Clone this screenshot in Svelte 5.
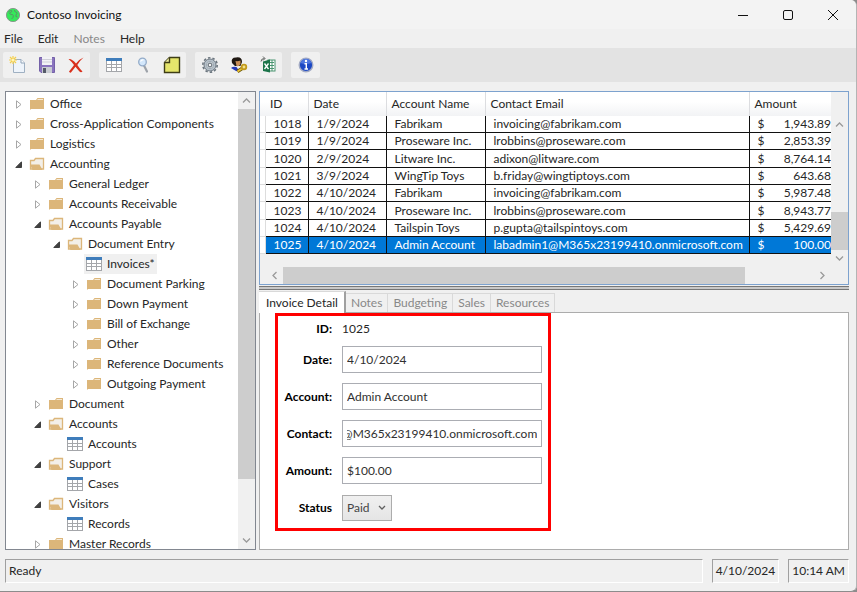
<script>
    const tree = [
        { label: "Office", depth: 0, kind: "folder" },
        { label: "Cross-Application Components", depth: 0, kind: "folder" },
        { label: "Logistics", depth: 0, kind: "folder" },
        { label: "Accounting", depth: 0, kind: "open" },
        { label: "General Ledger", depth: 1, kind: "folder" },
        { label: "Accounts Receivable", depth: 1, kind: "folder" },
        { label: "Accounts Payable", depth: 1, kind: "open" },
        { label: "Document Entry", depth: 2, kind: "open" },
        { label: "Invoices*", depth: 3, kind: "table" },
        { label: "Document Parking", depth: 3, kind: "folder" },
        { label: "Down Payment", depth: 3, kind: "folder" },
        { label: "Bill of Exchange", depth: 3, kind: "folder" },
        { label: "Other", depth: 3, kind: "folder" },
        { label: "Reference Documents", depth: 3, kind: "folder" },
        { label: "Outgoing Payment", depth: 3, kind: "folder" },
        { label: "Document", depth: 1, kind: "folder" },
        { label: "Accounts", depth: 1, kind: "open" },
        { label: "Accounts", depth: 2, kind: "table" },
        { label: "Support", depth: 1, kind: "open" },
        { label: "Cases", depth: 2, kind: "table" },
        { label: "Visitors", depth: 1, kind: "open" },
        { label: "Records", depth: 2, kind: "table" },
        { label: "Master Records", depth: 1, kind: "folder" },
    ];

    const invoices = [
        ["1018", "1/9/2024", "Fabrikam", "invoicing@fabrikam.com", "1,943.89"],
        ["1019", "1/9/2024", "Proseware Inc.", "lrobbins@proseware.com", "2,853.39"],
        ["1020", "2/9/2024", "Litware Inc.", "adixon@litware.com", "8,764.14"],
        ["1021", "3/9/2024", "WingTip Toys", "b.friday@wingtiptoys.com", "643.68"],
        ["1022", "4/10/2024", "Fabrikam", "invoicing@fabrikam.com", "5,987.48"],
        ["1023", "4/10/2024", "Proseware Inc.", "lrobbins@proseware.com", "8,943.77"],
        ["1024", "4/10/2024", "Tailspin Toys", "p.gupta@tailspintoys.com", "5,429.69"],
        ["1025", "4/10/2024", "Admin Account", "labadmin1@M365x23199410.onmicrosoft.com", "100.00"],
    ];

    const tabs = ["Invoice Detail", "Notes", "Budgeting", "Sales", "Resources"];

    let selectedNode = $state(8);
    let selectedId = $state("1025");
    let activeTab = $state("Invoice Detail");

    let date = $state("4/10/2024");
    let account = $state("Admin Account");
    let contact = $state("labadmin1@M365x23199410.onmicrosoft.com");
    let amount = $state("$100.00");
    let status = $state("Paid");

    // keep the end of a long address in view
    function scrollToEnd(node) {
        node.scrollLeft = node.scrollWidth;
    }
</script>

{#snippet tableIcon()}
    <svg width="16" height="16" viewBox="0 0 16 16" shape-rendering="crispEdges">
        <rect x="0" y="1" width="16" height="14" fill="#fff" />
        <path d="M0.500 4 V15 M5.500 4 V15 M10.500 4 V15 M15.500 4 V15 M0 7.500 H16 M0 10.500 H16 M0 14.500 H16" stroke="#a4a6aa" />
        <rect x="0" y="1" width="16" height="3" fill="#3f7dbb" />
    </svg>
{/snippet}

{#snippet arrow(turn)}
    <svg class="arrow {turn}" width="9" height="9" viewBox="0 0 9 9" fill="none" stroke="#9a9a9a" stroke-width="1.3">
        <path d="M1 6.5 L4.5 3 L8 6.5" />
    </svg>
{/snippet}

<div class="window">
    <header class="titlebar">
        <svg width="16" height="16" viewBox="0 0 16 16">
            <circle cx="8" cy="8" r="6.6" fill="#35e85a" stroke="#8a9a8e" stroke-width="1" />
            <path d="M3.500 5 q2-2.500 3.500-1 q-1 2-2.500 2 q1 2.500 3 1.500 q1.500 1 .5 3 l-1.500 1.500 M9.500 3 q0 2 1.500 2 q2 1 0 3 q-1 2 1.500 2" fill="none" stroke="#5d9069" stroke-width="1" />
        </svg>
        <h1>Contoso Invoicing</h1>
        <div class="captions">
            <button aria-label="Minimize"><svg width="12" height="12" stroke="#111" fill="none"><path d="M1 6.500 H11" /></svg></button>
            <button aria-label="Maximize"><svg width="12" height="12" stroke="#111" fill="none"><rect x="1.500" y="1.500" width="9" height="9" rx="1.500" /></svg></button>
            <button aria-label="Close"><svg width="12" height="12" stroke="#111" fill="none"><path d="M1 1 L11 11 M11 1 L1 11" /></svg></button>
        </div>
    </header>

    <nav class="menu">
        <button>File</button>
        <button>Edit</button>
        <button disabled>Notes</button>
        <button>Help</button>
    </nav>

    <div class="toolbar">
        <div class="group">
            <button aria-label="New">
                <svg width="18" height="18" viewBox="0 0 18 18">
                    <path d="M4.500 3.500 H12 L15.500 7 V16.500 H4.500 Z" fill="#eef4fb" stroke="#9fb0c2" />
                    <path d="M12 3.500 V7 H15.500" fill="#fff" stroke="#8fa3b8" />
                    <path d="M4 0 V8 M0 4 H8 M1 1 L7 7 M7 1 L1 7" stroke="#f5cf4a" stroke-width="1.200" />
                    <circle cx="4" cy="4" r="1.500" fill="#fff6b8" />
                </svg>
            </button>
            <button aria-label="Save">
                <svg width="18" height="18" viewBox="0 0 18 18">
                    <path d="M1.500 1.500 H16.500 V16.500 H3 L1.500 15 Z" fill="#8a74bf" stroke="#7461a8" />
                    <rect x="4" y="1" width="10" height="8" fill="#f2f2f6" />
                    <path d="M4 3.500 H14 M4 6 H14" stroke="#cfcfd8" />
                    <rect x="4" y="11" width="10" height="6" fill="#c9ccd2" />
                    <rect x="5" y="12" width="3" height="5" fill="#555a68" />
                </svg>
            </button>
            <button aria-label="Delete">
                <svg width="18" height="18" viewBox="0 0 18 18">
                    <path d="M1.500 3 Q5 2.500 9 7.500 Q12.500 3 16.500 1.500 Q12.500 5 10.300 9 Q13 13 15.500 15.500 Q14 17 12.500 15.500 Q10.500 13.500 8.500 10.800 Q6 14 4 16.500 Q2.500 17 2 15.500 Q4.500 12.500 7 9 Q4.500 5.500 1.500 3Z" fill="#d9301c" />
                </svg>
            </button>
        </div>
        <div class="group">
            <button aria-label="Table">{@render tableIcon()}</button>
            <button aria-label="Find">
                <svg width="18" height="18" viewBox="0 0 18 18">
                    <path d="M10 9.500 L13 15.500" stroke="#9da2a9" stroke-width="2.200" stroke-linecap="round" />
                    <circle cx="8.500" cy="6" r="3.800" fill="#d3e7fb" stroke="#93abc8" stroke-width="1.300" />
                    <path d="M6.500 5.500 Q7.500 3.700 9.500 4" stroke="#fff" stroke-width="1.200" fill="none" />
                </svg>
            </button>
            <button aria-label="Note">
                <svg width="18" height="18" viewBox="0 0 18 18">
                    <path d="M6.500 1.500 H16.500 V16.500 H1.500 V6.500 Z" fill="#e5e56b" stroke="#3e3d16" stroke-width="1.400" />
                    <path d="M6.500 1.500 V6.500 H1.500" fill="#f0efa0" stroke="#3e3d16" stroke-width="1.400" />
                </svg>
            </button>
        </div>
        <div class="group">
            <button aria-label="Settings">
                <svg width="18" height="18" viewBox="0 0 18 18">
                    <circle cx="9" cy="9" r="7.200" fill="none" stroke="#6b757e" stroke-width="1.600" stroke-dasharray="2.500 2.020" />
                    <circle cx="9" cy="9" r="6" fill="#b5c0c9" stroke="#6f7a84" />
                    <circle cx="9" cy="9" r="3.600" fill="#d2dae0" stroke="#a0aab2" />
                    <circle cx="9" cy="9" r="1.900" fill="#f4f4f4" stroke="#59636c" />
                </svg>
            </button>
            <button aria-label="User key">
                <svg width="18" height="18" viewBox="0 0 18 18">
                    <path d="M1 12 Q3 10 6.500 11 L10 16 L6 15 Z" fill="#2438b8" />
                    <path d="M2 7 Q.5 1.500 6 1.500 Q12 .5 12 6 L10.500 10 H5 Z" fill="#1f1812" />
                    <path d="M5.500 5 Q8 5.500 10.500 4.500 V8 Q9 11 6.500 10 Z" fill="#c98f58" />
                    <path d="M7.500 15.500 L12 12.500" stroke="#6e5800" stroke-width="3.400" />
                    <path d="M7.500 15.500 L12 12.500" stroke="#eac33a" stroke-width="1.800" />
                    <circle cx="14" cy="11" r="2.300" fill="#f4e18b" stroke="#c29a1c" stroke-width="1.800" />
                </svg>
            </button>
            <button aria-label="Export to Excel">
                <svg width="18" height="18" viewBox="0 0 18 18">
                    <rect x="9" y="4" width="7" height="11" fill="#fff" stroke="#4b9470" />
                    <path d="M10 6.500 H15 M10 9.500 H15 M10 12.500 H15 M13 4 V15" stroke="#4b9470" />
                    <path d="M4 5.500 L11 3.500 V16.500 L4 15 Z" fill="#1c744a" />
                    <path d="M5.500 7.500 L9.500 13 M9.500 7.500 L5.500 13" stroke="#fff" stroke-width="1.300" />
                    <path d="M2 5.500 Q2 2.500 5.500 2.500 M4 .5 L6 2.500 L4 4.500" fill="none" stroke="#5a5f5c" />
                </svg>
            </button>
        </div>
        <div class="group">
            <button aria-label="About">
                <svg width="18" height="18" viewBox="0 0 18 18">
                    <circle cx="9" cy="9" r="6.800" fill="#1c48c4" stroke="#a3abc4" stroke-width="1.400" />
                    <path d="M3.500 7 Q5 2.800 9 2.700 Q13 2.800 14.500 7 Q9 9 3.500 7Z" fill="#4c75df" />
                    <circle cx="9" cy="5" r="1.200" fill="#fff" />
                    <path d="M7.500 7.800 H9.300 V13 M7.500 13 H11" stroke="#fff" stroke-width="1.400" fill="none" />
                </svg>
            </button>
        </div>
    </div>

    <main>
        <aside class="tree">
            <ul>
                {#each tree as node, i}
                    <li style="padding-left: {node.depth * 19}px">
                        <span class="twisty">
                            {#if node.kind === "folder"}
                                <svg width="6" height="9" viewBox="0 0 6 9"><path d="M.5 .8 L5 4.500 L.5 8.200 Z" fill="#fff" stroke="#a6a6a6" /></svg>
                            {:else if node.kind === "open"}
                                <svg width="7" height="7" viewBox="0 0 7 7"><path d="M6.500 .8 V6.500 H.8 Z" fill="#404040" stroke="#404040" /></svg>
                            {/if}
                        </span>
                        <button class="node" class:selected={selectedNode === i} onclick={() => (selectedNode = i)}>
                            {#if node.kind === "folder"}
                                <svg width="16" height="16" viewBox="0 0 16 16">
                                    <path d="M1 4 H7 L8.500 2 H15 V13 H2 L1 14 Z" fill="#dcb67a" />
                                    <path d="M8.500 3.500 H14" stroke="#f6ead6" />
                                </svg>
                            {:else if node.kind === "open"}
                                <svg width="16" height="16" viewBox="0 0 16 16">
                                    <path d="M1.500 13 V4.500 H5 L6.500 2.500 H14.500 V13 Z" fill="#f3efe8" stroke="#dcb67a" stroke-width="1.300" />
                                    <path d="M1 8.500 H10.500 L13.500 14 H3.500 Z" fill="#dcb67a" />
                                </svg>
                            {:else}
                                {@render tableIcon()}
                            {/if}
                            <span>{node.label}</span>
                        </button>
                    </li>
                {/each}
            </ul>
            <div class="vbar">
                {@render arrow("up")}
                <div class="thumb"></div>
                {@render arrow("down")}
            </div>
        </aside>

        <section class="content">
            <div class="grid">
                <div class="grid-body">
                    <div class="rows">
                        <table>
                            <colgroup>
                                <col class="c-head" /><col class="c-id" /><col class="c-date" /><col class="c-account" /><col class="c-email" /><col />
                            </colgroup>
                            <thead>
                                <tr><td></td><th>ID</th><th>Date</th><th>Account Name</th><th>Contact Email</th><th>Amount</th></tr>
                            </thead>
                            <tbody>
                                {#each invoices as [id, day, name, email, total]}
                                    <tr class:selected={selectedId === id} onclick={() => (selectedId = id)}>
                                        <td class="head"></td>
                                        <td>{id}</td>
                                        <td>{day}</td>
                                        <td>{name}</td>
                                        <td>{email}</td>
                                        <td><div class="money"><span>$</span><span>{total}</span></div></td>
                                    </tr>
                                {/each}
                            </tbody>
                        </table>
                    </div>
                    <div class="vbar">
                        {@render arrow("up")}
                        <div class="thumb"></div>
                        {@render arrow("down")}
                    </div>
                </div>
                <div class="hbar">
                    {@render arrow("left")}
                    <div class="track"><div class="thumb"></div></div>
                    {@render arrow("right")}
                </div>
            </div>
            <div class="splitter"></div>

            <div class="tabs" role="tablist">
                {#each tabs as tab}
                    <button role="tab" aria-selected={activeTab === tab} class:active={activeTab === tab} onclick={() => (activeTab = tab)}>{tab}</button>
                {/each}
            </div>
            <div class="detail">
                <form>
                    <span class="label">ID:</span>
                    <output>1025</output>
                    <label for="date">Date:</label>
                    <input id="date" type="text" bind:value={date} />
                    <label for="account">Account:</label>
                    <input id="account" type="text" bind:value={account} />
                    <label for="contact">Contact:</label>
                    <input id="contact" type="text" bind:value={contact} use:scrollToEnd />
                    <label for="amount">Amount:</label>
                    <input id="amount" type="text" bind:value={amount} />
                    <label for="status">Status</label>
                    <div class="select">
                        <select id="status" bind:value={status}>
                            <option>Paid</option>
                        </select>
                        <svg width="8" height="6" viewBox="0 0 8 6" fill="none" stroke="#606060" stroke-width="1.300"><path d="M1 1 L4 4 L7 1" /></svg>
                    </div>
                </form>
            </div>
        </section>
    </main>

    <footer>
        <div class="ready">Ready</div>
        <div>4/10/2024</div>
        <div>10:14 AM</div>
    </footer>
</div>

<style>
    :global(body) {
        background: #8c8c8c;
    }

    .window {
        display: flex;
        flex-direction: column;
        box-sizing: border-box;
        height: 100vh;
        border-right: 1px solid #b4b4b4;
        border-bottom: 1px solid #8c8c8c;
        border-radius: 0 6px 6px 0;
        overflow: hidden;
        background: #f0f0f0;
        color: #262626;
        font: 12px/16px Lato, "Open Sans", sans-serif;
    }

    button {
        border: 0;
        padding: 0;
        background: none;
        color: inherit;
        font: inherit;
    }

    svg {
        display: block;
        flex: none;
    }

    .titlebar {
        display: flex;
        align-items: center;
        gap: 6px;
        height: 29px;
        padding: 0 1px 0 5px;
        background: #f3f3f3;
    }

    h1 {
        flex: 1;
        margin: 0;
        color: #111;
        font-size: 12px;
        font-weight: 400;
    }

    .captions {
        display: flex;
    }

    .captions button {
        display: grid;
        place-items: center;
        width: 45px;
        height: 28px;
    }

    .menu {
        display: flex;
        gap: 15px;
        height: 19px;
        padding-left: 4px;
    }

    .menu button:disabled {
        color: #888;
    }

    .toolbar {
        display: flex;
        gap: 9px;
        padding: 4px 3px;
        background: #e3e3e3;
    }

    .group {
        display: flex;
        border-radius: 2px;
        background: #f0f0f0;
    }

    .group button {
        display: grid;
        place-items: center;
        width: 29px;
        height: 26px;
    }

    main {
        display: flex;
        flex: 1;
        gap: 3px;
        min-height: 0;
        padding: 9px 7px 9px 5px;
    }

    .tree {
        display: flex;
        box-sizing: border-box;
        width: 251px;
        border: 1px solid #828790;
        background: #fff;
    }

    ul {
        flex: 1;
        margin: 0;
        padding: 2px 0 0 8px;
        overflow: hidden;
        list-style: none;
    }

    li {
        display: flex;
        align-items: center;
        height: 20px;
    }

    .twisty {
        display: grid;
        justify-content: center;
        width: 9px;
        margin-right: 4px;
    }

    .node {
        display: flex;
        align-items: center;
        gap: 5px;
        height: 20px;
        padding: 0 2px;
        white-space: nowrap;
    }

    .node.selected {
        background: #f0f0f0;
    }

    .vbar {
        display: flex;
        flex-direction: column;
        align-items: center;
        width: 17px;
        background: #f0f0f0;
    }

    .arrow {
        margin: 4px;
    }

    .down {
        transform: rotate(180deg);
    }

    .left {
        transform: rotate(-90deg);
    }

    .right {
        transform: rotate(90deg);
    }

    .thumb {
        background: #cdcdcd;
    }

    .tree .thumb {
        width: 100%;
        height: 81%;
    }

    .tree .down {
        margin-top: auto;
    }

    .content {
        display: flex;
        flex: 1;
        flex-direction: column;
        min-width: 0;
    }

    .grid {
        border: 1px solid #7da2ce;
    }

    .grid-body {
        display: flex;
    }

    .rows {
        flex: 1;
        min-width: 0;
        padding-bottom: 13px;
        overflow: hidden;
    }

    table {
        width: 100%;
        border-collapse: collapse;
        table-layout: fixed;
        background: #fff;
    }

    .c-head {
        width: 5px;
    }

    .c-id {
        width: 43px;
    }

    .c-date {
        width: 78px;
    }

    .c-account {
        width: 99px;
    }

    .c-email {
        width: 264px;
    }

    thead tr {
        height: 24px;
        background: linear-gradient(#fff 40%, #f2f3f5);
    }

    th {
        padding: 0 5px;
        border-right: 1px solid #dcdde0;
        font-weight: 400;
        text-align: left;
    }

    td {
        height: 16px;
        padding: 0;
        white-space: nowrap;
    }

    tbody tr:nth-child(3n) td {
        height: 17px;
    }

    tbody td {
        padding-left: 8px;
        border-right: 1px solid #111;
        border-bottom: 1px solid #111;
    }

    tbody td.head {
        padding: 0;
        border-color: #ddd;
        background: #fff;
    }

    th:last-child,
    td:last-child {
        border-right: 0;
    }

    .money {
        display: flex;
        justify-content: space-between;
    }

    tbody .selected {
        background: #0078d7;
        color: #fff;
    }

    .grid .vbar {
        padding-top: 24px;
    }

    .grid .vbar .thumb {
        width: 100%;
        height: 38px;
        margin-top: auto;
    }

    .hbar {
        display: flex;
        align-items: center;
        padding: 0 17px 0 6px;
    }

    .track {
        flex: 1;
    }

    .hbar .thumb {
        width: 87%;
        height: 17px;
    }

    .splitter {
        height: 2px;
        margin: 1px 0;
        border: solid #777;
        border-width: 1px 0;
        background: #c8c8c8;
    }

    .tabs {
        display: flex;
        align-items: flex-end;
        height: 21px;
    }

    .tabs button {
        height: 19px;
        padding: 0 5px;
        border: 1px solid #d9d9d9;
        border-width: 1px 1px 0 0;
        color: #888;
    }

    .tabs .active {
        z-index: 1;
        height: 22px;
        margin-bottom: -1px;
        padding: 0 6px 0 7px;
        border-right: 2px solid #a0a0a0;
        background: #fff;
        color: #262626;
    }

    .detail {
        flex: 1;
        min-height: 0;
        border: 1px solid #acacac;
        background: #fff;
    }

    form {
        display: grid;
        grid-template-columns: 54px 200px;
        grid-template-rows: 14px;
        grid-auto-rows: 27px;
        gap: 10px;
        align-items: center;
        box-sizing: border-box;
        width: 276px;
        margin-left: 15px;
        padding: 6px 0 7px;
        border: 3px solid #f00;
    }

    label,
    .label {
        color: #000;
        font-weight: 700;
        text-align: right;
        white-space: nowrap;
    }

    input {
        box-sizing: border-box;
        width: 200px;
        height: 27px;
        padding: 0 4px;
        border: 1px solid #abadb3;
        background: #fff;
        color: #303030;
        font: inherit;
    }

    .select {
        display: grid;
        align-items: center;
        width: 50px;
    }

    select,
    .select svg {
        grid-area: 1 / 1;
    }

    select {
        height: 26px;
        padding: 0 4px;
        border: 1px solid #acacac;
        border-radius: 0;
        appearance: none;
        background: linear-gradient(#f0f0f0, #e5e5e5);
        color: #444;
        font: inherit;
    }

    .select svg {
        justify-self: end;
        margin-right: 6px;
        pointer-events: none;
    }

    footer {
        display: flex;
        gap: 9px;
        padding: 0 7px 8px 5px;
    }

    footer div {
        height: 22px;
        padding: 0 3px;
        border: 1px solid;
        border-color: #a0a0a0 #fff #fff #a0a0a0;
        line-height: 22px;
    }

    .ready {
        flex: 1;
    }
</style>
